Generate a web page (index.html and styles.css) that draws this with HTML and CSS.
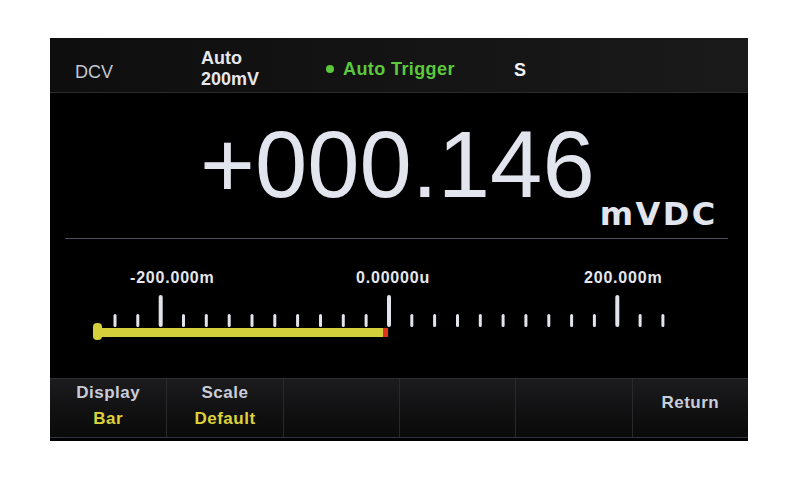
FILE: index.html
```html
<!DOCTYPE html>
<html lang="en">
<head>
<meta charset="utf-8">
<title>DCV Bar</title>
<link rel="stylesheet" href="styles.css">
</head>
<body>
<div class="page">
  <div class="screen">
    <header class="status">
      <div class="mode">DCV</div>
      <div class="range"><div>Auto</div><div>200mV</div></div>
      <div class="trigger"><span class="dot"></span><span>Auto Trigger</span></div>
      <div class="rate">S</div>
    </header>
    <section class="reading">
      <div class="value">+000.146</div>
      <div class="unit">mVDC</div>
    </section>
    <div class="rule"></div>
    <section class="bargraph">
      <div class="scale-labels">
        <span class="lbl lbl-min">-200.000m</span>
        <span class="lbl lbl-mid">0.00000u</span>
        <span class="lbl lbl-max">200.000m</span>
      </div>
      <svg class="ruler" width="698" height="50" viewBox="0 0 698 50" xmlns="http://www.w3.org/2000/svg">
        <g fill="#e2e4ec">
          <rect x="63.5" y="21" width="3" height="13" rx="1.5"/>
          <rect x="86.3" y="21" width="3" height="13" rx="1.5"/>
          <rect x="108.7" y="2" width="4" height="32" rx="2"/>
          <rect x="132" y="21" width="3" height="13" rx="1.5"/>
          <rect x="154.8" y="21" width="3" height="13" rx="1.5"/>
          <rect x="177.7" y="21" width="3" height="13" rx="1.5"/>
          <rect x="200.5" y="21" width="3" height="13" rx="1.5"/>
          <rect x="223.3" y="21" width="3" height="13" rx="1.5"/>
          <rect x="246.1" y="21" width="3" height="13" rx="1.5"/>
          <rect x="269" y="21" width="3" height="13" rx="1.5"/>
          <rect x="291.8" y="21" width="3" height="13" rx="1.5"/>
          <rect x="314.6" y="21" width="3" height="13" rx="1.5"/>
          <rect x="337" y="2" width="4" height="32" rx="2"/>
          <rect x="360.3" y="21" width="3" height="13" rx="1.5"/>
          <rect x="383.1" y="21" width="3" height="13" rx="1.5"/>
          <rect x="406" y="21" width="3" height="13" rx="1.5"/>
          <rect x="428.8" y="21" width="3" height="13" rx="1.5"/>
          <rect x="451.6" y="21" width="3" height="13" rx="1.5"/>
          <rect x="474.4" y="21" width="3" height="13" rx="1.5"/>
          <rect x="497.3" y="21" width="3" height="13" rx="1.5"/>
          <rect x="520.1" y="21" width="3" height="13" rx="1.5"/>
          <rect x="542.9" y="21" width="3" height="13" rx="1.5"/>
          <rect x="565.3" y="2" width="4" height="32" rx="2"/>
          <rect x="588.6" y="21" width="3" height="13" rx="1.5"/>
          <rect x="611.4" y="21" width="3" height="13" rx="1.5"/>
        </g>
        <rect x="45" y="35" width="293" height="9" fill="#d6cf3c"/>
        <rect x="43" y="30" width="9" height="17" rx="4" fill="#d6cf3c"/>
        <rect x="333" y="35" width="5" height="9" fill="#e0321e"/>
      </svg>
    </section>
    <nav class="softkeys">
      <div class="key"><span class="k-title">Display</span><span class="k-value">Bar</span></div>
      <div class="key"><span class="k-title">Scale</span><span class="k-value">Default</span></div>
      <div class="key"></div>
      <div class="key"></div>
      <div class="key"></div>
      <div class="key key-single"><span class="k-title">Return</span></div>
    </nav>
  </div>
</div>
</body>
</html>
```
FILE: styles.css
```css
html, body {
  margin: 0;
  padding: 0;
  background: #ffffff;
}

body {
  font-family: "Liberation Sans", Arial, sans-serif;
}

.page {
  padding: 38px 0 0 50px;
}

.screen {
  width: 698px;
  height: 403px;
  background: #000000;
  display: flex;
  flex-direction: column;
  overflow: hidden;
}

/* ---------- status bar ---------- */
.status {
  height: 54px;
  flex: none;
  border-bottom: 1px solid #2a2b2e;
  background: linear-gradient(90deg, #0e0e0e 0%, #151515 60%, #1a1a1a 100%);
  display: flex;
  align-items: flex-start;
  padding-left: 25px;
}

.mode {
  width: 126px;
  margin-top: 24px;
  font-size: 18px;
  line-height: 20px;
  color: #c4c7cf;
}

.range {
  width: 125px;
  margin-top: 10px;
  font-weight: bold;
  font-size: 18px;
  line-height: 21px;
  color: #e6e7ec;
}

.trigger {
  width: 188px;
  margin-top: 21px;
  display: flex;
  align-items: center;
  font-weight: bold;
  font-size: 18px;
  line-height: 20px;
  letter-spacing: 0.4px;
  color: #5cc93c;
}

.dot {
  width: 8px;
  height: 8px;
  border-radius: 50%;
  background: #5cc93c;
  margin-right: 9px;
}

.rate {
  margin-top: 22px;
  font-weight: bold;
  font-size: 18px;
  line-height: 20px;
  color: #f2f2f6;
}

/* ---------- main reading ---------- */
.reading {
  height: 145px;
  flex: none;
  display: flex;
  align-items: flex-start;
  padding-left: 150px;
  box-sizing: border-box;
}

.value {
  margin-top: 25px;
  font-size: 94px;
  line-height: 94px;
  color: #e3e5ee;
}

.unit {
  margin-top: 105px;
  margin-left: 5px;
  font-family: "DejaVu Sans", "Liberation Sans", sans-serif;
  font-weight: bold;
  font-size: 32px;
  line-height: 32px;
  letter-spacing: 2.5px;
  color: #e3e5ee;
}

.rule {
  height: 1px;
  flex: none;
  margin: 0 20px 0 15px;
  background: #4a5062;
}

/* ---------- bar graph ---------- */
.bargraph {
  margin-top: 31px;
}

.scale-labels {
  display: flex;
  padding-left: 80px;
  font-weight: bold;
  font-size: 16px;
  line-height: 16px;
  letter-spacing: 0.8px;
  color: #e6e7ee;
}

.lbl-min {
  width: 226px;
}

.lbl-mid {
  width: 228px;
}

.ruler {
  display: block;
  margin-top: 7px;
}

/* ---------- soft keys ---------- */
.softkeys {
  margin-top: auto;
  margin-bottom: 3px;
  height: 60px;
  box-sizing: border-box;
  display: grid;
  grid-template-columns: repeat(6, 1fr);
  border-top: 1px solid #2e2f33;
  border-bottom: 1px solid #30343e;
  background: linear-gradient(180deg, #1c1c1e 0%, #111112 55%, #0a0a0a 100%);
}

.key {
  display: flex;
  flex-direction: column;
  align-items: center;
  padding-top: 1px;
  border-left: 1px solid #28292c;
  font-weight: bold;
  font-size: 17px;
  line-height: 26px;
  letter-spacing: 0.5px;
}

.key:first-child {
  border-left: none;
}

.key-single {
  padding-top: 11px;
}

.k-title {
  color: #c9cdd9;
}

.k-value {
  color: #dcd23a;
}
```
